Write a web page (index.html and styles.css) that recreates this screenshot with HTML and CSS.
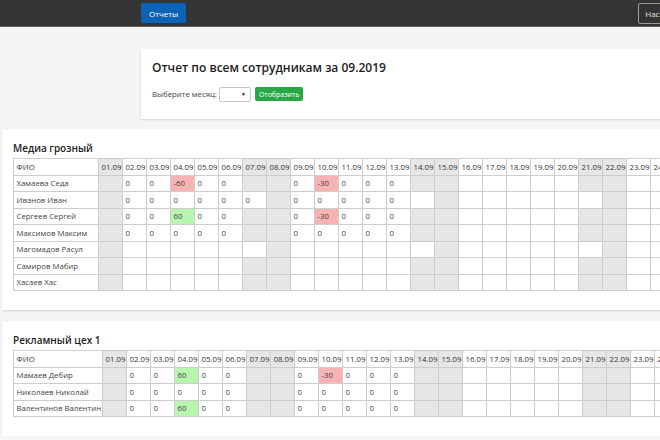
FILE: index.html
```html
<!DOCTYPE html>
<html lang="ru">
<head>
<meta charset="utf-8">
<title>Отчеты</title>
<link rel="stylesheet" href="styles.css">
</head>
<body>
<div class="page">
  <nav class="nav">
    <a class="btn-nav">Отчеты</a>
    <a class="btn-outline">Настройки</a>
  </nav>

  <section class="report-card">
    <h1 class="report-title">Отчет по всем сотрудникам за 09.2019</h1>
    <div class="form-row">
      <span class="form-label">Выберите месяц:</span>
      <span class="select"><span class="caret">▼</span></span>
      <span class="btn-green">Отобразить</span>
    </div>
  </section>

  <section class="dept-card">
    <h2 class="dept-title">Медиа грозный</h2>
    <table class="grid t1">
      <tr><th class="name">ФИО</th><th class="w">01.09</th><th>02.09</th><th>03.09</th><th>04.09</th><th>05.09</th><th>06.09</th><th class="w">07.09</th><th class="w">08.09</th><th>09.09</th><th>10.09</th><th>11.09</th><th>12.09</th><th>13.09</th><th class="w">14.09</th><th class="w">15.09</th><th>16.09</th><th>17.09</th><th>18.09</th><th>19.09</th><th>20.09</th><th class="w">21.09</th><th class="w">22.09</th><th>23.09</th><th>24.09</th><th>25.09</th><th>26.09</th><th>27.09</th><th class="w">28.09</th><th class="w">29.09</th><th>30.09</th></tr>
      <tr><td class="name">Хамаева Седа</td><td class="w"></td><td>0</td><td>0</td><td class="r">-60</td><td>0</td><td>0</td><td class="w"></td><td class="w"></td><td>0</td><td class="r">-30</td><td>0</td><td>0</td><td>0</td><td class="w"></td><td class="w"></td><td></td><td></td><td></td><td></td><td></td><td class="w"></td><td class="w"></td><td></td><td></td><td></td><td></td><td></td><td class="w"></td><td class="w"></td><td></td></tr>
      <tr><td class="name">Иванов Иван</td><td class="w"></td><td>0</td><td>0</td><td>0</td><td>0</td><td>0</td><td>0</td><td class="w"></td><td>0</td><td>0</td><td>0</td><td>0</td><td>0</td><td></td><td class="w"></td><td></td><td></td><td></td><td></td><td></td><td></td><td class="w"></td><td></td><td></td><td></td><td></td><td></td><td></td><td class="w"></td><td></td></tr>
      <tr><td class="name">Сергеев Сергей</td><td class="w"></td><td>0</td><td>0</td><td class="g">60</td><td>0</td><td>0</td><td class="w"></td><td class="w"></td><td>0</td><td class="r">-30</td><td>0</td><td>0</td><td>0</td><td class="w"></td><td class="w"></td><td></td><td></td><td></td><td></td><td></td><td class="w"></td><td class="w"></td><td></td><td></td><td></td><td></td><td></td><td class="w"></td><td class="w"></td><td></td></tr>
      <tr><td class="name">Максимов Максим</td><td class="w"></td><td>0</td><td>0</td><td>0</td><td>0</td><td>0</td><td class="w"></td><td class="w"></td><td>0</td><td>0</td><td>0</td><td>0</td><td>0</td><td class="w"></td><td class="w"></td><td></td><td></td><td></td><td></td><td></td><td class="w"></td><td class="w"></td><td></td><td></td><td></td><td></td><td></td><td class="w"></td><td class="w"></td><td></td></tr>
      <tr><td class="name">Магомадов Расул</td><td class="w"></td><td></td><td></td><td></td><td></td><td></td><td></td><td class="w"></td><td></td><td></td><td></td><td></td><td></td><td></td><td class="w"></td><td></td><td></td><td></td><td></td><td></td><td></td><td class="w"></td><td></td><td></td><td></td><td></td><td></td><td></td><td class="w"></td><td></td></tr>
      <tr><td class="name">Самиров Мабир</td><td class="w"></td><td></td><td></td><td></td><td></td><td></td><td class="w"></td><td class="w"></td><td></td><td></td><td></td><td></td><td></td><td class="w"></td><td class="w"></td><td></td><td></td><td></td><td></td><td></td><td class="w"></td><td class="w"></td><td></td><td></td><td></td><td></td><td></td><td class="w"></td><td class="w"></td><td></td></tr>
      <tr><td class="name">Хасаев Хас</td><td class="w"></td><td></td><td></td><td></td><td></td><td></td><td class="w"></td><td class="w"></td><td></td><td></td><td></td><td></td><td></td><td class="w"></td><td class="w"></td><td></td><td></td><td></td><td></td><td></td><td class="w"></td><td class="w"></td><td></td><td></td><td></td><td></td><td></td><td class="w"></td><td class="w"></td><td></td></tr>
    </table>
  </section>

  <section class="dept-card">
    <h2 class="dept-title">Рекламный цех 1</h2>
    <table class="grid t2">
      <tr><th class="name">ФИО</th><th class="w">01.09</th><th>02.09</th><th>03.09</th><th>04.09</th><th>05.09</th><th>06.09</th><th class="w">07.09</th><th class="w">08.09</th><th>09.09</th><th>10.09</th><th>11.09</th><th>12.09</th><th>13.09</th><th class="w">14.09</th><th class="w">15.09</th><th>16.09</th><th>17.09</th><th>18.09</th><th>19.09</th><th>20.09</th><th class="w">21.09</th><th class="w">22.09</th><th>23.09</th><th>24.09</th><th>25.09</th><th>26.09</th><th>27.09</th><th class="w">28.09</th><th class="w">29.09</th><th>30.09</th></tr>
      <tr><td class="name">Мамаев Дебир</td><td class="w"></td><td>0</td><td>0</td><td class="g">60</td><td>0</td><td>0</td><td class="w"></td><td class="w"></td><td>0</td><td class="r">-30</td><td>0</td><td>0</td><td>0</td><td class="w"></td><td class="w"></td><td></td><td></td><td></td><td></td><td></td><td class="w"></td><td class="w"></td><td></td><td></td><td></td><td></td><td></td><td class="w"></td><td class="w"></td><td></td></tr>
      <tr><td class="name">Николаев Николай</td><td class="w"></td><td>0</td><td>0</td><td>0</td><td>0</td><td>0</td><td class="w"></td><td class="w"></td><td>0</td><td>0</td><td>0</td><td>0</td><td>0</td><td class="w"></td><td class="w"></td><td></td><td></td><td></td><td></td><td></td><td class="w"></td><td class="w"></td><td></td><td></td><td></td><td></td><td></td><td class="w"></td><td class="w"></td><td></td></tr>
      <tr><td class="name">Валентинов Валентин</td><td class="w"></td><td>0</td><td>0</td><td class="g">60</td><td>0</td><td>0</td><td class="w"></td><td class="w"></td><td>0</td><td>0</td><td>0</td><td>0</td><td>0</td><td class="w"></td><td class="w"></td><td></td><td></td><td></td><td></td><td></td><td class="w"></td><td class="w"></td><td></td><td></td><td></td><td></td><td></td><td class="w"></td><td class="w"></td><td></td></tr>
    </table>
  </section>
</div>
</body>
</html>
```

FILE: styles.css
```css
html, body {
  margin: 0;
  padding: 0;
  overflow: hidden;
  background: #f5f5f5;
  font-family: "Open Sans", "Noto Sans", sans-serif;
  color: #333;
}

.page {
  width: 860px;
}

.nav {
  height: 26px;
  background: #343434;
  border-bottom: 1px solid #5c5c5c;
  display: flex;
  align-items: center;
  padding-left: 141px;
}

.btn-nav {
  height: 20px;
  padding: 0 8px;
  display: flex;
  align-items: center;
  background: #0b63b6;
  color: #fff;
  font-size: 8px;
  border-radius: 2px;
}

.btn-outline {
  height: 19px;
  padding: 0 6px;
  margin-left: 452px;
  display: flex;
  align-items: center;
  border: 1px solid #9c9c9c;
  border-radius: 2px;
  color: #e4e4e4;
  font-size: 8px;
}

.report-card {
  margin: 22px 0 0 141px;
  width: 600px;
  background: #fff;
  padding: 11px 11px 18px;
  box-shadow: 0 1px 2px rgba(0, 0, 0, 0.14);
}

.report-title {
  margin: 0;
  font-size: 12px;
  line-height: 16px;
  font-weight: 600;
  color: #222;
}

.form-row {
  display: flex;
  align-items: center;
  margin-top: 11px;
  height: 14px;
}

.form-label {
  font-size: 7.8px;
  color: #444;
}

.select {
  width: 30px;
  height: 13px;
  margin-left: 2px;
  border: 1px solid #c8c8c8;
  border-radius: 2px;
  background: #fff;
  display: flex;
  align-items: center;
  justify-content: flex-end;
}

.caret {
  font-size: 5px;
  color: #222;
  margin-right: 4px;
}

.btn-green {
  height: 14px;
  margin-left: 4px;
  padding: 0 4px;
  display: flex;
  align-items: center;
  background: #28a745;
  color: #fff;
  font-size: 7px;
  border-radius: 2px;
}

.dept-card {
  margin: 10px 0 0 2px;
  width: 838px;
  background: #fff;
  padding: 12px 10px 19px 11px;
  box-shadow: 0 1px 2px rgba(0, 0, 0, 0.14);
}

.dept-card + .dept-card {
  margin-top: 11px;
}

.dept-title {
  margin: 0 0 3px;
  font-size: 10px;
  line-height: 14px;
  font-weight: 600;
  color: #222;
}

.grid {
  border-collapse: collapse;
  table-layout: fixed;
  font-size: 7.8px;
  color: #444;
}

.t1 { width: 805px; }
.t2 { width: 809px; }

.grid th,
.grid td {
  width: 24px;
  height: 16.5px;
  padding: 0 2.5px;
  border: 1px solid #cdcdcd;
  text-align: left;
  font-weight: 400;
  white-space: nowrap;
  overflow: hidden;
  box-sizing: border-box;
}

.grid th {
  color: #333;
}

.t1 .name { width: 85px; }
.t2 .name { width: 89px; }

.grid .w { background: #e6e6e6; }
.grid .r { background: #f7b3b3; }
.grid .g { background: #b8f6b0; }
```
